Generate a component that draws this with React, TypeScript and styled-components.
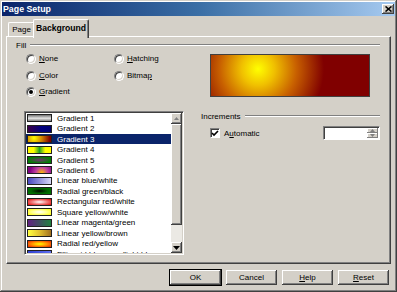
import React from 'react';
import styled, { createGlobalStyle } from 'styled-components';

const GlobalStyle = createGlobalStyle`
  html, body {
    margin: 0;
    padding: 0;
    background: #d4d0c8;
  }
  * {
    box-sizing: border-box;
  }
`;

const Window = styled.div`
  width: 397px;
  height: 292px;
  padding: 2px;
  background: #d4d0c8;
  box-shadow: inset -1px -1px #404040, inset 1px 1px #d4d0c8, inset -2px -2px #808080,
    inset 2px 2px #fff;
  display: flex;
  flex-direction: column;
  font-family: 'Liberation Sans', Arial, sans-serif;
  font-size: 8px;
  color: #000;
  overflow: hidden;
`;

const TitleBar = styled.div`
  height: 14px;
  flex-shrink: 0;
  background: linear-gradient(to right, #0a246a, #3a6ea5 50%, #a6caf0);
  color: #fff;
  font-weight: bold;
  font-size: 8.8px;
  display: flex;
  align-items: center;
  justify-content: space-between;
  padding: 0 1px 0 1px;
`;

const CloseBtn = styled.div`
  width: 12px;
  height: 10px;
  background: #d4d0c8;
  box-shadow: inset -1px -1px #404040, inset 1px 1px #fff, inset -2px -2px #808080;
  display: flex;
  align-items: center;
  justify-content: center;
`;

const Body = styled.div`
  flex: 1;
  display: flex;
  flex-direction: column;
  padding: 0 4px;
`;

const TabRow = styled.div`
  margin-top: 3px;
  height: 17px;
  display: flex;
  align-items: flex-end;
  padding-left: 2px;
`;

const Tab = styled.div<{ $active?: boolean }>`
  position: relative;
  z-index: ${(p) => (p.$active ? 2 : 1)};
  height: ${(p) => (p.$active ? '19px' : '14px')};
  margin: ${(p) => (p.$active ? '0 -2px -2px -2px' : '0')};
  width: ${(p) => (p.$active ? '56px' : '27px')};
  padding-bottom: ${(p) => (p.$active ? '2px' : '0')};
  background: #d4d0c8;
  border-top: 1px solid #fff;
  border-left: 1px solid #fff;
  border-right: 1px solid #404040;
  border-radius: 2px 2px 0 0;
  box-shadow: inset -1px 0 #808080;
  font-weight: ${(p) => (p.$active ? 'bold' : 'normal')};
  font-size: ${(p) => (p.$active ? '8.6px' : '8px')};
  display: flex;
  align-items: center;
  justify-content: center;
`;

const Panel = styled.div`
  height: 228px;
  border-top: 1px solid #fff;
  border-left: 1px solid #fff;
  border-right: 1px solid #404040;
  border-bottom: 1px solid #404040;
  box-shadow: inset -1px -1px #808080;
  padding-top: 3px;
  display: flex;
  flex-direction: column;
`;

const GroupHeader = styled.div<{ $left: number }>`
  height: 10px;
  margin-left: ${(p) => p.$left}px;
  margin-right: 10px;
  display: flex;
  align-items: center;
  gap: 4px;
  flex-shrink: 0;
`;

const GroupLine = styled.div`
  flex: 1;
  height: 2px;
  border-top: 1px solid #808080;
  border-bottom: 1px solid #fff;
`;

const FillBody = styled.div`
  margin-top: 4px;
  height: 43px;
  display: flex;
`;

const RadioGrid = styled.div`
  margin-left: 19px;
  display: grid;
  grid-template-columns: 88px auto;
  grid-template-rows: 16.5px 16.5px 10px;
  align-items: start;
`;

const Option = styled.label`
  display: flex;
  align-items: center;
  gap: 3px;
  height: 10px;
  line-height: 10px;
`;

const RadioDot = styled.span<{ $on?: boolean }>`
  width: 10px;
  height: 10px;
  border-radius: 50%;
  background: #fff;
  border: 1px solid;
  border-color: #808080 #fff #fff #808080;
  box-shadow: inset 1px 1px #404040, inset -1px -1px #d4d0c8;
  display: flex;
  align-items: center;
  justify-content: center;
  &::after {
    content: '';
    width: 4px;
    height: 4px;
    border-radius: 50%;
    background: ${(p) => (p.$on ? '#000' : 'transparent')};
  }
`;

const U = styled.span`
  text-decoration: underline;
`;

const Preview = styled.div`
  margin-left: auto;
  margin-right: 20px;
  width: 160px;
  height: 43px;
  border: 1px solid #404040;
  background: radial-gradient(
    circle 66px at 47px 14px,
    #ffff00 0%,
    #f0c000 25%,
    #c86000 58%,
    #800000 100%
  );
`;

const LowerRow = styled.div`
  margin-top: 14px;
  display: flex;
`;

const ListBox = styled.div`
  margin-left: 17px;
  width: 160px;
  height: 144px;
  background: #fff;
  border: 1px solid;
  border-color: #808080 #fff #fff #808080;
  box-shadow: inset 1px 1px #404040, inset -1px -1px #d4d0c8;
  padding: 1px;
  display: flex;
  overflow: hidden;
`;

const ListItems = styled.div`
  flex: 1;
  overflow: hidden;
`;

const Row = styled.div<{ $sel?: boolean }>`
  height: 10.46px;
  display: flex;
  align-items: center;
  background: ${(p) => (p.$sel ? '#0a246a' : 'transparent')};
  color: ${(p) => (p.$sel ? '#fff' : '#000')};
  white-space: nowrap;
`;

const Swatch = styled.span`
  width: 25px;
  height: 8px;
  margin: 0 5px 0 1px;
  border: 1px solid #202020;
  flex-shrink: 0;
`;

const ScrollBar = styled.div`
  width: 11px;
  display: flex;
  flex-direction: column;
  background: #ebe9e4;
`;

const ScrollBtn = styled.div`
  width: 11px;
  height: 11px;
  background: #d4d0c8;
  box-shadow: inset -1px -1px #404040, inset 1px 1px #fff, inset -2px -2px #808080;
  display: flex;
  align-items: center;
  justify-content: center;
  flex-shrink: 0;
`;

const Thumb = styled.div`
  height: 101px;
  background: #d4d0c8;
  box-shadow: inset -1px -1px #404040, inset 1px 1px #fff, inset -2px -2px #808080;
`;

const ScrollGap = styled.div`
  flex: 1;
`;

const Increments = styled.div`
  margin-left: 17px;
  flex: 1;
  display: flex;
  flex-direction: column;
`;

const IncRow = styled.div`
  margin-top: 5px;
  display: flex;
  align-items: flex-start;
  margin-right: 10px;
`;

const CheckRow = styled.label`
  margin-left: 9px;
  margin-top: 2px;
  display: flex;
  align-items: center;
  gap: 4px;
  height: 10px;
`;

const CheckBox = styled.span`
  width: 10px;
  height: 10px;
  background: #fff;
  border: 1px solid;
  border-color: #808080 #fff #fff #808080;
  box-shadow: inset 1px 1px #404040;
  display: flex;
  align-items: center;
  justify-content: center;
`;

const SpinField = styled.div`
  margin-left: auto;
  width: 57px;
  height: 14px;
  background: #fff;
  border: 1px solid;
  border-color: #808080 #fff #fff #808080;
  box-shadow: inset 1px 1px #404040;
  display: flex;
  justify-content: flex-end;
  padding: 1px;
`;

const SpinCol = styled.div`
  width: 11px;
  display: flex;
  flex-direction: column;
`;

const SpinBtn = styled.div`
  flex: 1;
  background: #d4d0c8;
  box-shadow: inset -1px -1px #808080, inset 1px 1px #fff;
  display: flex;
  align-items: center;
  justify-content: center;
`;

const ButtonRow = styled.div`
  margin-top: 5px;
  display: flex;
  justify-content: flex-end;
  gap: 3px;
  padding-right: 1px;
`;

const Button = styled.div<{ $default?: boolean }>`
  width: 53px;
  height: 17px;
  background: #d4d0c8;
  border: 1px solid ${(p) => (p.$default ? '#000' : 'transparent')};
  box-shadow: inset -1px -1px #404040, inset 1px 1px #fff, inset -2px -2px #808080;
  display: flex;
  align-items: center;
  justify-content: center;
`;

const Arrow = ({ up }: { up?: boolean }) => (
  <svg width="7" height="4" viewBox="0 0 7 4">
    <path d={up ? 'M3.5 0 L7 4 L0 4 Z' : 'M0 0 L7 0 L3.5 4 Z'} fill="#000" />
  </svg>
);

const SmallArrow = ({ up }: { up?: boolean }) => (
  <svg width="5" height="3" viewBox="0 0 5 3">
    <path d={up ? 'M2.5 0 L5 3 L0 3 Z' : 'M0 0 L5 0 L2.5 3 Z'} fill="#808080" />
  </svg>
);

const gradients: { name: string; bg: string }[] = [
  { name: 'Gradient 1', bg: 'linear-gradient(to bottom, #707070, #e4e4e4 55%, #808080)' },
  { name: 'Gradient 2', bg: 'linear-gradient(to right, #3c0048, #000080 60%, #000070)' },
  { name: 'Gradient 3', bg: 'radial-gradient(circle 16px at 6px 2px, #ffff00, #d08000 50%, #800000)' },
  { name: 'Gradient 4', bg: 'linear-gradient(to right, #ffff00 25%, #20a020 50%, #ffff00 75%)' },
  { name: 'Gradient 5', bg: 'radial-gradient(ellipse at center, #703070 0%, #008000 75%)' },
  { name: 'Gradient 6', bg: 'radial-gradient(circle 12px at 60% 100%, #ffc000 0%, #c040a0 50%, #800080)' },
  { name: 'Linear blue/white', bg: 'linear-gradient(to right, #4848c0, #d8d8f8)' },
  { name: 'Radial green/black', bg: 'radial-gradient(ellipse at center, #000 0%, #006000 50%, #008000)' },
  { name: 'Rectangular red/white', bg: 'radial-gradient(ellipse at center, #fff 0%, #f08080 45%, #e00000)' },
  { name: 'Square yellow/white', bg: 'radial-gradient(ellipse at center, #fff 0%, #ffff90 45%, #ffff00)' },
  { name: 'Linear magenta/green', bg: 'linear-gradient(to right, #602080, #208040)' },
  { name: 'Linear yellow/brown', bg: 'linear-gradient(to right, #ffff40, #e0c030 50%, #a07020)' },
  { name: 'Radial red/yellow', bg: 'radial-gradient(ellipse at center, #ffff00 0%, #ff8000 55%, #e02000)' },
  { name: 'Ellipsoid blue grey/light blue', bg: 'linear-gradient(to right, #3040d0, #6070f0)' },
];

const App: React.FC = () => {
  return (
    <Window>
      <GlobalStyle />
      <TitleBar>
        <span>Page Setup</span>
        <CloseBtn>
          <svg width="7" height="6" viewBox="0 0 7 6">
            <path d="M0.5 0.5 L6.5 5.5 M6.5 0.5 L0.5 5.5" stroke="#000" strokeWidth="1.6" />
          </svg>
        </CloseBtn>
      </TitleBar>
      <Body>
        <TabRow>
          <Tab>Page</Tab>
          <Tab $active>Background</Tab>
        </TabRow>
        <Panel>
          <GroupHeader $left={9}>
            <span>Fill</span>
            <GroupLine />
          </GroupHeader>
          <FillBody>
            <RadioGrid>
              <Option>
                <RadioDot />
                <span>
                  <U>N</U>one
                </span>
              </Option>
              <Option>
                <RadioDot />
                <span>
                  <U>H</U>atching
                </span>
              </Option>
              <Option>
                <RadioDot />
                <span>
                  <U>C</U>olor
                </span>
              </Option>
              <Option>
                <RadioDot />
                <span>
                  Bitma<U>p</U>
                </span>
              </Option>
              <Option>
                <RadioDot $on />
                <span>
                  <U>G</U>radient
                </span>
              </Option>
            </RadioGrid>
            <Preview />
          </FillBody>
          <LowerRow>
            <ListBox>
              <ListItems>
                {gradients.map((g, i) => (
                  <Row key={g.name} $sel={i === 2}>
                    <Swatch style={{ background: g.bg }} />
                    {g.name}
                  </Row>
                ))}
              </ListItems>
              <ScrollBar>
                <ScrollBtn>
                  <SmallArrow up />
                </ScrollBtn>
                <Thumb />
                <ScrollGap />
                <ScrollBtn>
                  <Arrow />
                </ScrollBtn>
              </ScrollBar>
            </ListBox>
            <Increments>
              <GroupHeader $left={0}>
                <span>Increments</span>
                <GroupLine />
              </GroupHeader>
              <IncRow>
                <CheckRow>
                  <CheckBox>
                    <svg width="8" height="7" viewBox="0 0 8 7">
                      <path d="M1 3 L3 5 L7 1" stroke="#000" strokeWidth="1.6" fill="none" />
                    </svg>
                  </CheckBox>
                  <span>
                    A<U>u</U>tomatic
                  </span>
                </CheckRow>
                <SpinField>
                  <SpinCol>
                    <SpinBtn>
                      <SmallArrow up />
                    </SpinBtn>
                    <SpinBtn>
                      <SmallArrow />
                    </SpinBtn>
                  </SpinCol>
                </SpinField>
              </IncRow>
            </Increments>
          </LowerRow>
        </Panel>
        <ButtonRow>
          <Button $default>OK</Button>
          <Button>Cancel</Button>
          <Button>
            <span>
              <U>H</U>elp
            </span>
          </Button>
          <Button>
            <span>
              <U>R</U>eset
            </span>
          </Button>
        </ButtonRow>
      </Body>
    </Window>
  );
};

export default App;
